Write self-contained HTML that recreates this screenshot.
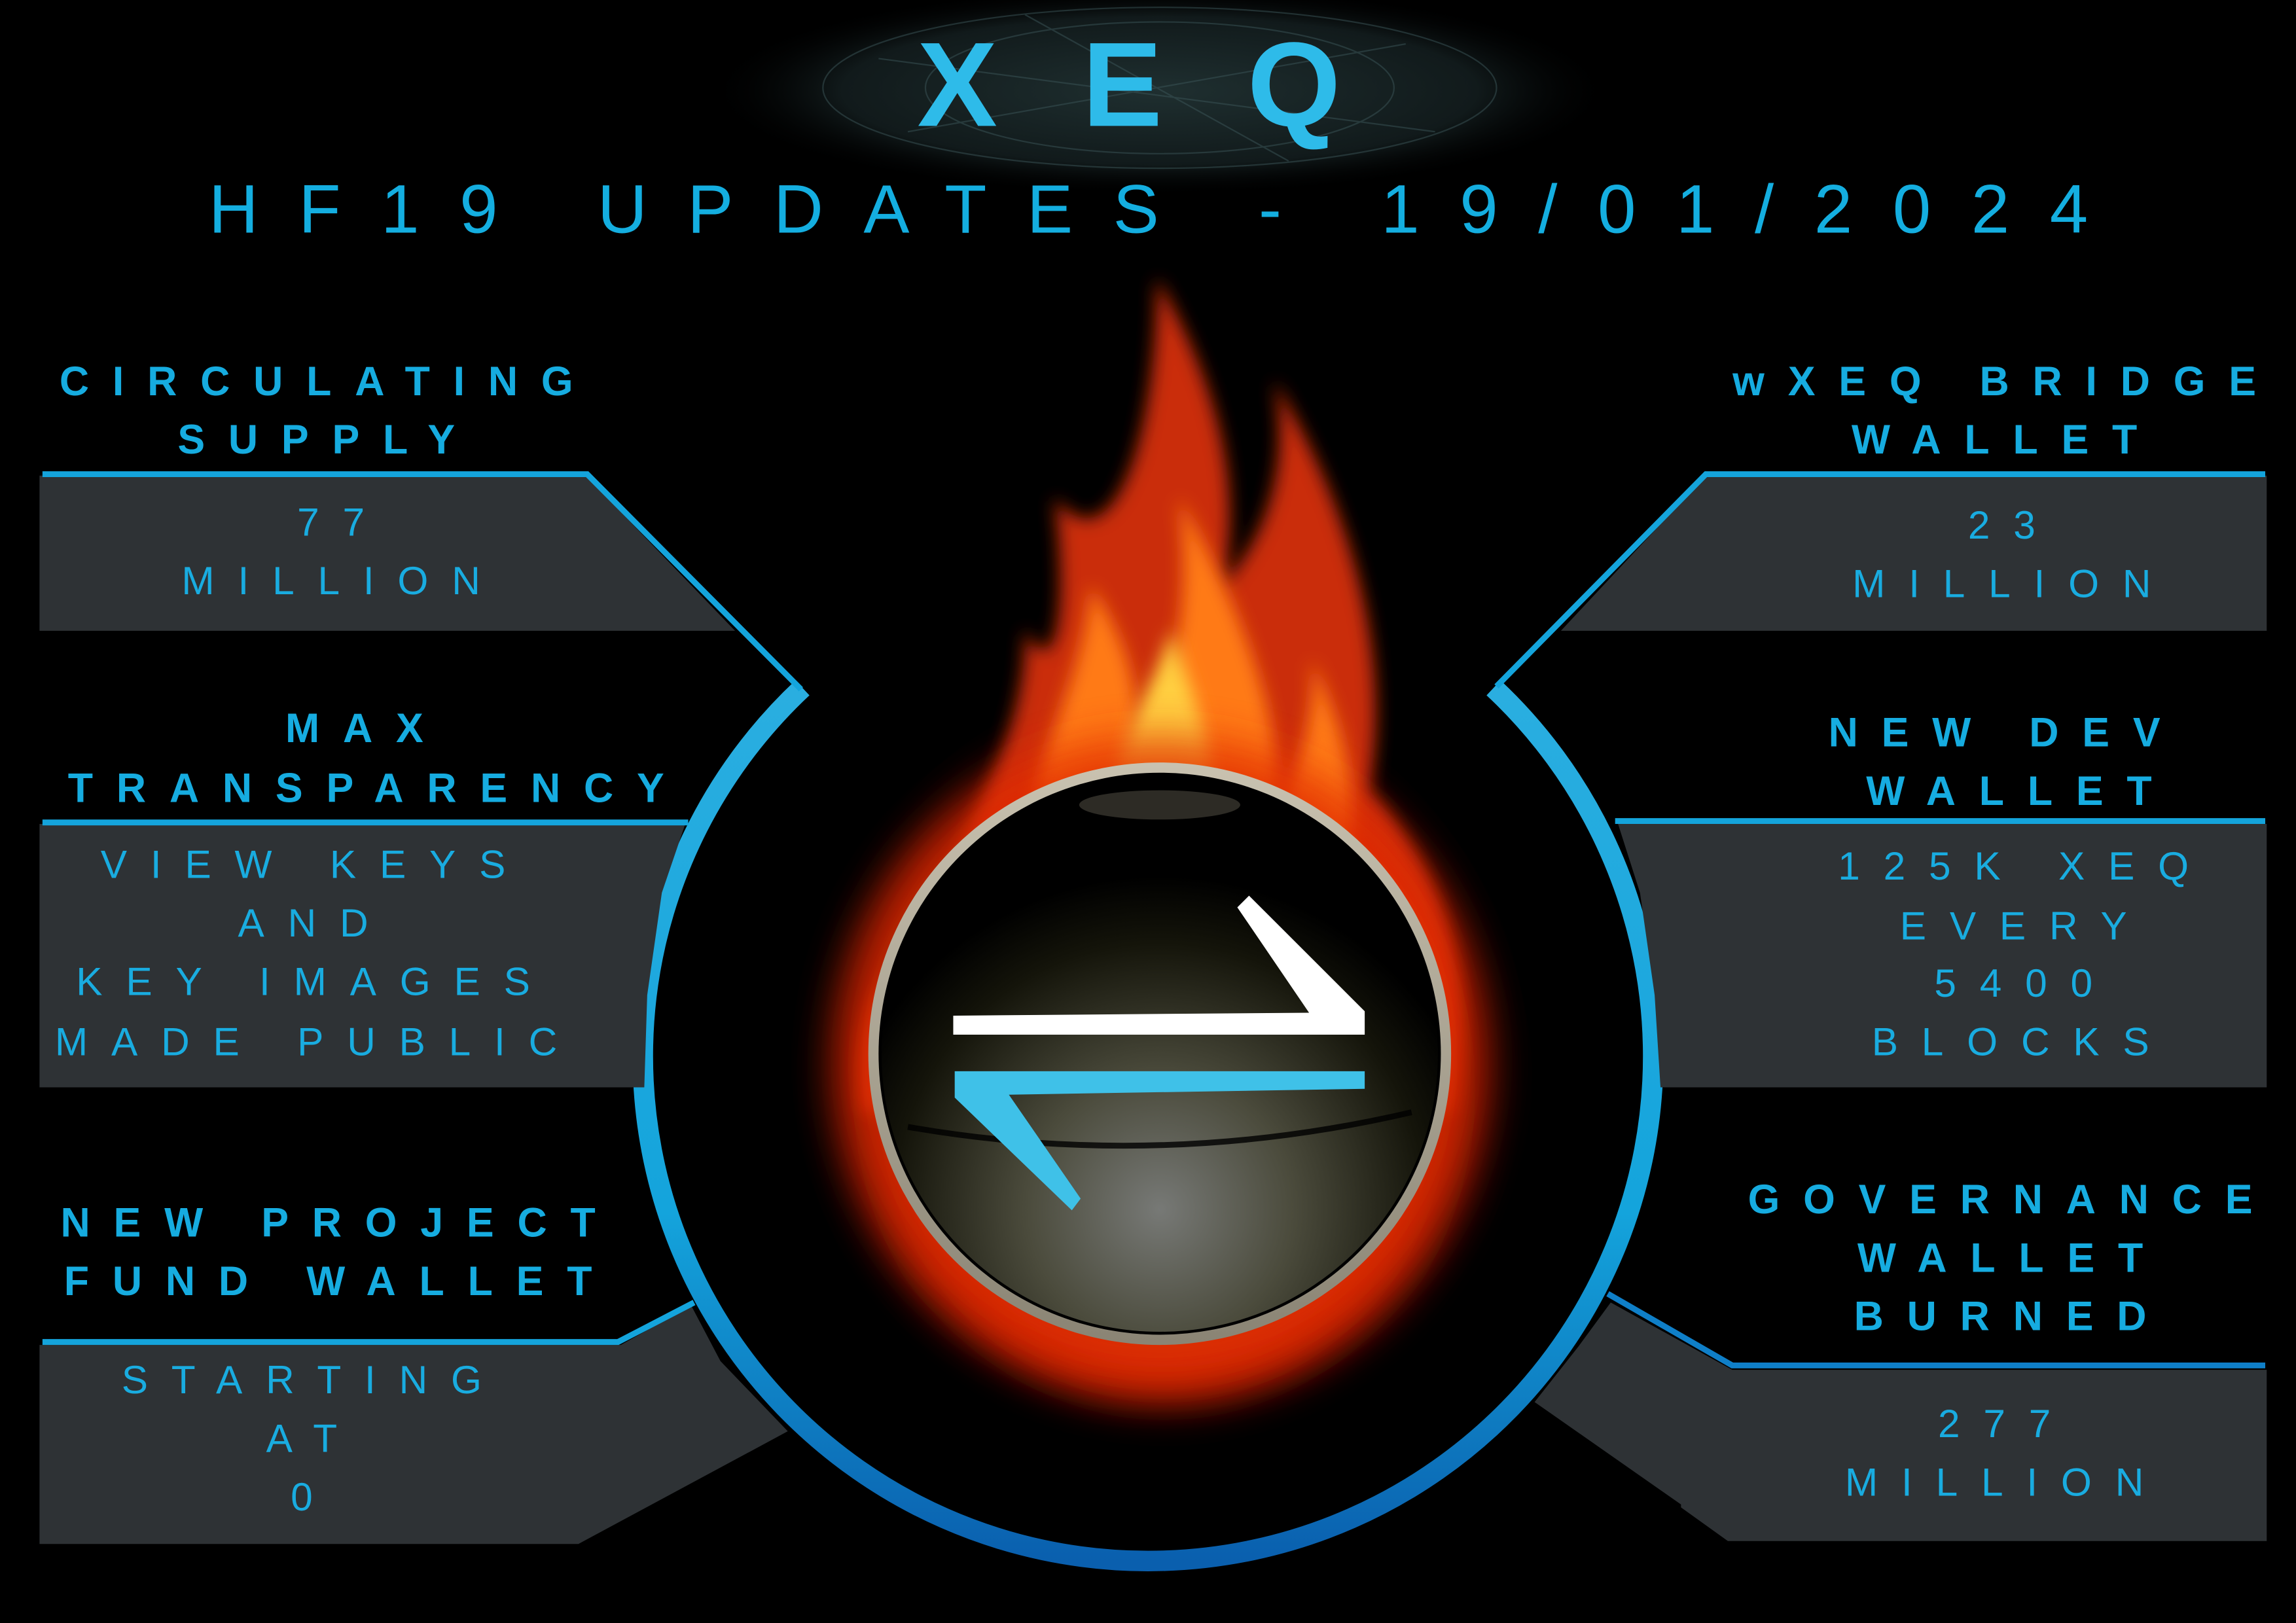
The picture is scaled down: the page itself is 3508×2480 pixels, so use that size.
<!DOCTYPE html>
<html><head><meta charset="utf-8"><style>
html,body{margin:0;padding:0;background:#000;}
body{width:3508px;height:2480px;overflow:hidden;}
svg{display:block;}
.h{font-family:"Liberation Sans",sans-serif;font-weight:bold;fill:#16ace0;font-size:28px;letter-spacing:16px;text-anchor:middle;}
.v{font-family:"Liberation Sans",sans-serif;fill:#19ace0;font-size:27px;letter-spacing:16px;text-anchor:middle;}
</style></head><body>
<svg width="3508" height="2480" viewBox="0 0 1568 1109" preserveAspectRatio="none" xmlns="http://www.w3.org/2000/svg">
<defs>
<radialGradient id="neb" cx="0.5" cy="0.5" r="0.5">
<stop offset="0" stop-color="#1f2f30"/><stop offset="0.7" stop-color="#111a1b"/><stop offset="1" stop-color="#000" stop-opacity="0"/>
</radialGradient>
<linearGradient id="ring" x1="0" y1="0" x2="0" y2="1">
<stop offset="0" stop-color="#2aaee0"/><stop offset="0.6" stop-color="#14a4dc"/><stop offset="1" stop-color="#0a5fae"/>
</linearGradient>
<radialGradient id="fire1" cx="0.5" cy="0.6" r="0.5">
<stop offset="0" stop-color="#ffcc33"/><stop offset="0.45" stop-color="#ff7a10"/><stop offset="0.75" stop-color="#d41a05"/><stop offset="1" stop-color="#300" stop-opacity="0"/>
</radialGradient>
<radialGradient id="orb" cx="0.5" cy="0.78" r="0.6">
<stop offset="0" stop-color="#777976"/><stop offset="0.4" stop-color="#4b4b3c"/><stop offset="0.8" stop-color="#14140a"/><stop offset="1" stop-color="#000"/>
</radialGradient>
<linearGradient id="rim" x1="0" y1="0" x2="0" y2="1">
<stop offset="0" stop-color="#c9c2b0"/><stop offset="1" stop-color="#8a8474"/>
</linearGradient>
<filter id="bl" x="-50%" y="-50%" width="200%" height="200%"><feGaussianBlur stdDeviation="14"/></filter>
<filter id="bl2" x="-50%" y="-50%" width="200%" height="200%"><feGaussianBlur stdDeviation="6"/></filter>
</defs>
<rect width="1568" height="1109" fill="#000"/>
<ellipse cx="792" cy="62" rx="310" ry="72" fill="url(#neb)"/>
<g fill="none" stroke="#3b5558" stroke-width="1" opacity="0.5">
<ellipse cx="792" cy="60" rx="230" ry="55"/><ellipse cx="792" cy="60" rx="160" ry="45"/><path d="M600 40 L980 90 M620 90 L960 30 M700 10 L880 110"/>
</g>
<text x="800" y="86" font-family="Liberation Sans,sans-serif" font-weight="bold" font-size="82" fill="#2ebbe9" text-anchor="middle" letter-spacing="58">XEQ</text>
<text x="798" y="159" font-family="Liberation Sans,sans-serif" font-size="47" fill="#14aee0" text-anchor="middle" letter-spacing="27.5">HF19 UPDATES - 19/01/2024</text>

<!-- fire -->
<g>
<ellipse cx="795" cy="690" rx="240" ry="270" fill="url(#fire1)" filter="url(#bl)" opacity="0.9"/>
<path d="M640 640 C650 560 700 520 700 430 C720 470 730 420 720 340 C760 390 790 300 790 190 C830 260 850 330 835 400 C870 360 880 310 870 260 C930 360 950 460 935 540 C990 600 1010 680 990 760 L590 760 C580 700 600 660 640 640Z" fill="#e03008" filter="url(#bl2)" opacity="0.9"/>
<path d="M700 600 C700 520 740 470 745 400 C770 440 780 470 775 520 C800 470 815 420 805 340 C850 420 880 500 870 560 C890 520 900 480 895 450 C930 520 930 580 905 620Z" fill="#ff7a14" filter="url(#bl2)"/>
<path d="M760 560 C760 500 790 470 800 430 C815 480 835 520 825 560Z" fill="#ffcf40" filter="url(#bl2)"/>
<ellipse cx="792" cy="725" rx="222" ry="222" fill="#e02a06" filter="url(#bl)" opacity="0.75"/>
</g>

<!-- ring -->
<path d="M548 470 A345 345 0 1 0 1020 470" fill="none" stroke="url(#ring)" stroke-width="14"/>

<!-- left panels -->
<polygon points="27,325 400,325 502,431 27,431" fill="#2e3235"/>
<polyline points="29,324 401,324 547,471" fill="none" stroke="#14a4dc" stroke-width="4"/>
<polygon points="27,563 468,563 452,610 442,680 440,743 27,743" fill="#2e3235"/>
<line x1="29" y1="562" x2="470" y2="562" stroke="#14a4dc" stroke-width="4"/>
<polygon points="27,919 424,919 472,892 492,930 538,978 395,1055 27,1055" fill="#2e3235"/>
<polyline points="29,917 422,917 474,890" fill="none" stroke="#14a4dc" stroke-width="4"/>

<!-- right panels -->
<polygon points="1165,325 1548,325 1548,431 1066,431" fill="#2e3235"/>
<polyline points="1547,324 1165,324 1022,469" fill="none" stroke="#14a4dc" stroke-width="4"/>
<polygon points="1105,563 1548,563 1548,743 1134,743 1130,680 1120,610" fill="#2e3235"/>
<line x1="1103" y1="561" x2="1547" y2="561" stroke="#14a4dc" stroke-width="4"/>
<polygon points="1100,890 1183,936 1548,936 1548,1053 1180,1053 1148,1030 1148,1028 1048,958 1078,920" fill="#2e3235"/>
<polyline points="1098,884 1183,933 1547,933" fill="none" stroke="#0f7fc8" stroke-width="4"/>

<!-- orb -->
<circle cx="792" cy="720" r="199" fill="url(#rim)"/>
<circle cx="792" cy="720" r="192" fill="#000"/>
<circle cx="792" cy="720" r="190" fill="url(#orb)"/>
<ellipse cx="792" cy="550" rx="55" ry="10" fill="#5a554a" opacity="0.5"/>
<path d="M620 770 Q792 800 964 760" fill="none" stroke="#000" stroke-width="4" opacity="0.8"/>
<polygon points="651,694 894,692 845,620 853,612 932,691 932,707 651,707" fill="#fff"/>
<polygon points="652,732 932,732 932,744 689,748 738,819 732,827 652,750" fill="#3fc1e8"/>

<!-- left text -->
<text class="h" x="224" y="270">CIRCULATING</text>
<text class="h" x="224" y="310">SUPPLY</text>
<text class="v" x="234" y="366">77</text>
<text class="v" x="234" y="406">MILLION</text>
<text class="h" x="250" y="507">MAX</text>
<text class="h" x="258" y="548">TRANSPARENCY</text>
<text class="v" x="215" y="600">VIEW KEYS</text>
<text class="v" x="215" y="640">AND</text>
<text class="v" x="215" y="680">KEY IMAGES</text>
<text class="v" x="217" y="721">MADE PUBLIC</text>
<text class="h" x="232" y="845">NEW PROJECT</text>
<text class="h" x="232" y="885">FUND WALLET</text>
<text class="v" x="214" y="952">STARTING</text>
<text class="v" x="214" y="992">AT</text>
<text class="v" x="214" y="1032">0</text>

<!-- right text -->
<text class="h" x="1370" y="270">wXEQ BRIDGE</text>
<text class="h" x="1370" y="310">WALLET</text>
<text class="v" x="1375" y="368">23</text>
<text class="v" x="1375" y="408">MILLION</text>
<text class="h" x="1370" y="510">NEW DEV</text>
<text class="h" x="1380" y="550">WALLET</text>
<text class="v" x="1383" y="601">125K XEQ</text>
<text class="v" x="1383" y="642" font-size="23">EVERY</text>
<text class="v" x="1383" y="681">5400</text>
<text class="v" x="1381" y="721" font-size="23">BLOCKS</text>
<text class="h" x="1374" y="829">GOVERNANCE</text>
<text class="h" x="1374" y="869">WALLET</text>
<text class="h" x="1374" y="909">BURNED</text>
<text class="v" x="1370" y="982">277</text>
<text class="v" x="1370" y="1022">MILLION</text>
</svg>
</body></html>
